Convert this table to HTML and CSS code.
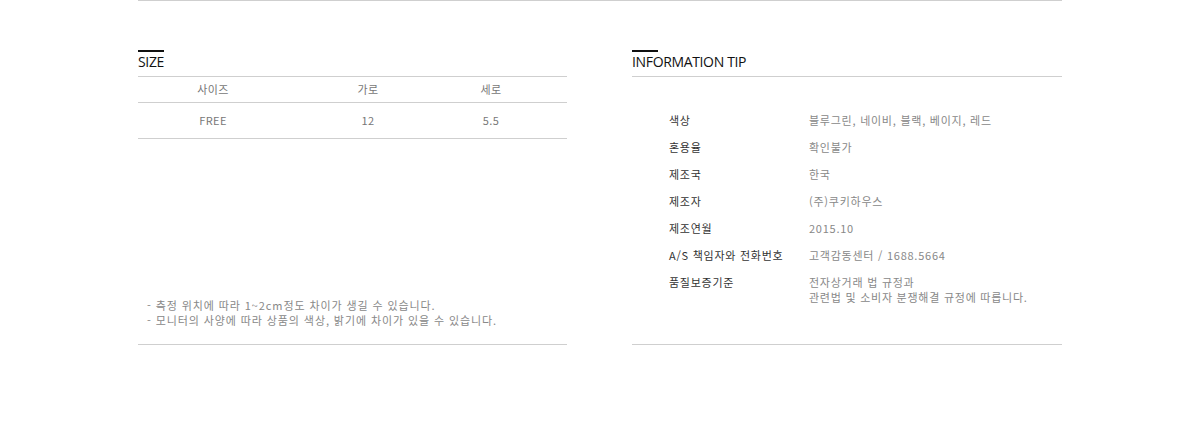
FILE: index.html
```html
<!DOCTYPE html>
<html lang="ko">
<head>
<meta charset="utf-8">
<title>Size &amp; Information</title>
<link rel="stylesheet" href="styles.css">
</head>
<body>
<div class="wrap">
  <div class="cols">
    <section class="col col-size">
      <h2 class="title">SIZE</h2>
      <div class="size-table">
        <div class="row head">
          <span>사이즈</span><span>가로</span><span>세로</span><span></span>
        </div>
        <div class="row">
          <span>FREE</span><span>12</span><span>5.5</span><span></span>
        </div>
      </div>
      <ul class="notes">
        <li>- 측정 위치에 따라 1~2cm정도 차이가 생길 수 있습니다.</li>
        <li>- 모니터의 사양에 따라 상품의 색상, 밝기에 차이가 있을 수 있습니다.</li>
      </ul>
    </section>
    <section class="col col-info">
      <h2 class="title">INFORMATION TIP</h2>
      <dl class="info">
        <dt>색상</dt><dd>블루그린, 네이비, 블랙, 베이지, 레드</dd>
        <dt>혼용율</dt><dd>확인불가</dd>
        <dt>제조국</dt><dd>한국</dd>
        <dt>제조자</dt><dd>(주)쿠키하우스</dd>
        <dt>제조연월</dt><dd>2015.10</dd>
        <dt>A/S 책임자와 전화번호</dt><dd>고객감동센터 / 1688.5664</dd>
        <dt>품질보증기준</dt><dd>전자상거래 법 규정과<br>관련법 및 소비자 분쟁해결 규정에 따릅니다.</dd>
      </dl>
    </section>
  </div>
</div>
</body>
</html>
```

FILE: styles.css
```css
* { box-sizing: border-box; }
html, body { margin: 0; padding: 0; background: #fff; }
body {
  font-family: "Noto Sans CJK KR", "Noto Sans", sans-serif;
  font-size: 11px;
  color: #333;
}
.wrap {
  width: 924px;
  margin: 0 auto;
  border-top: 1px solid #cfcfcf;
}
.cols {
  display: flex;
  gap: 65px;
  padding-top: 49px;
}
.col {
  display: flex;
  flex-direction: column;
  height: 295px;
  border-bottom: 1px solid #cfcfcf;
}
.col-size { width: 429px; }
.col-info { width: 430px; }

.title {
  margin: 0;
  font-family: "Open Sans", "Noto Sans", sans-serif;
  font-weight: 500;
  font-size: 14px;
  letter-spacing: -0.35px;
  color: #111;
  line-height: 20px;
  padding-bottom: 4px;
  border-bottom: 1px solid #cfcfcf;
}
.title::before {
  content: "";
  display: block;
  width: 26px;
  height: 2px;
  background: #111;
}

.size-table .row {
  display: grid;
  grid-template-columns: 150px 160px 86px 1fr;
  text-align: center;
  color: #777;
  border-bottom: 1px solid #cfcfcf;
  align-items: center;
  letter-spacing: 0.4px;
}
.size-table .row.head { height: 26px; padding-bottom: 1px; }
.size-table .row:not(.head) { height: 36px; padding-bottom: 1px; }

.notes {
  list-style: none;
  margin: auto 0 0;
  padding: 0 0 16px 9px;
  color: #888;
  line-height: 15px;
  letter-spacing: 0.9px;
}

.info {
  display: grid;
  grid-template-columns: 140px 1fr;
  row-gap: 12px;
  margin: 0;
  padding: 36px 0 0 37px;
  line-height: 15px;
  letter-spacing: 0.75px;
}
.info dt { color: #333; }
.info dd { margin: 0; color: #888; }
```
